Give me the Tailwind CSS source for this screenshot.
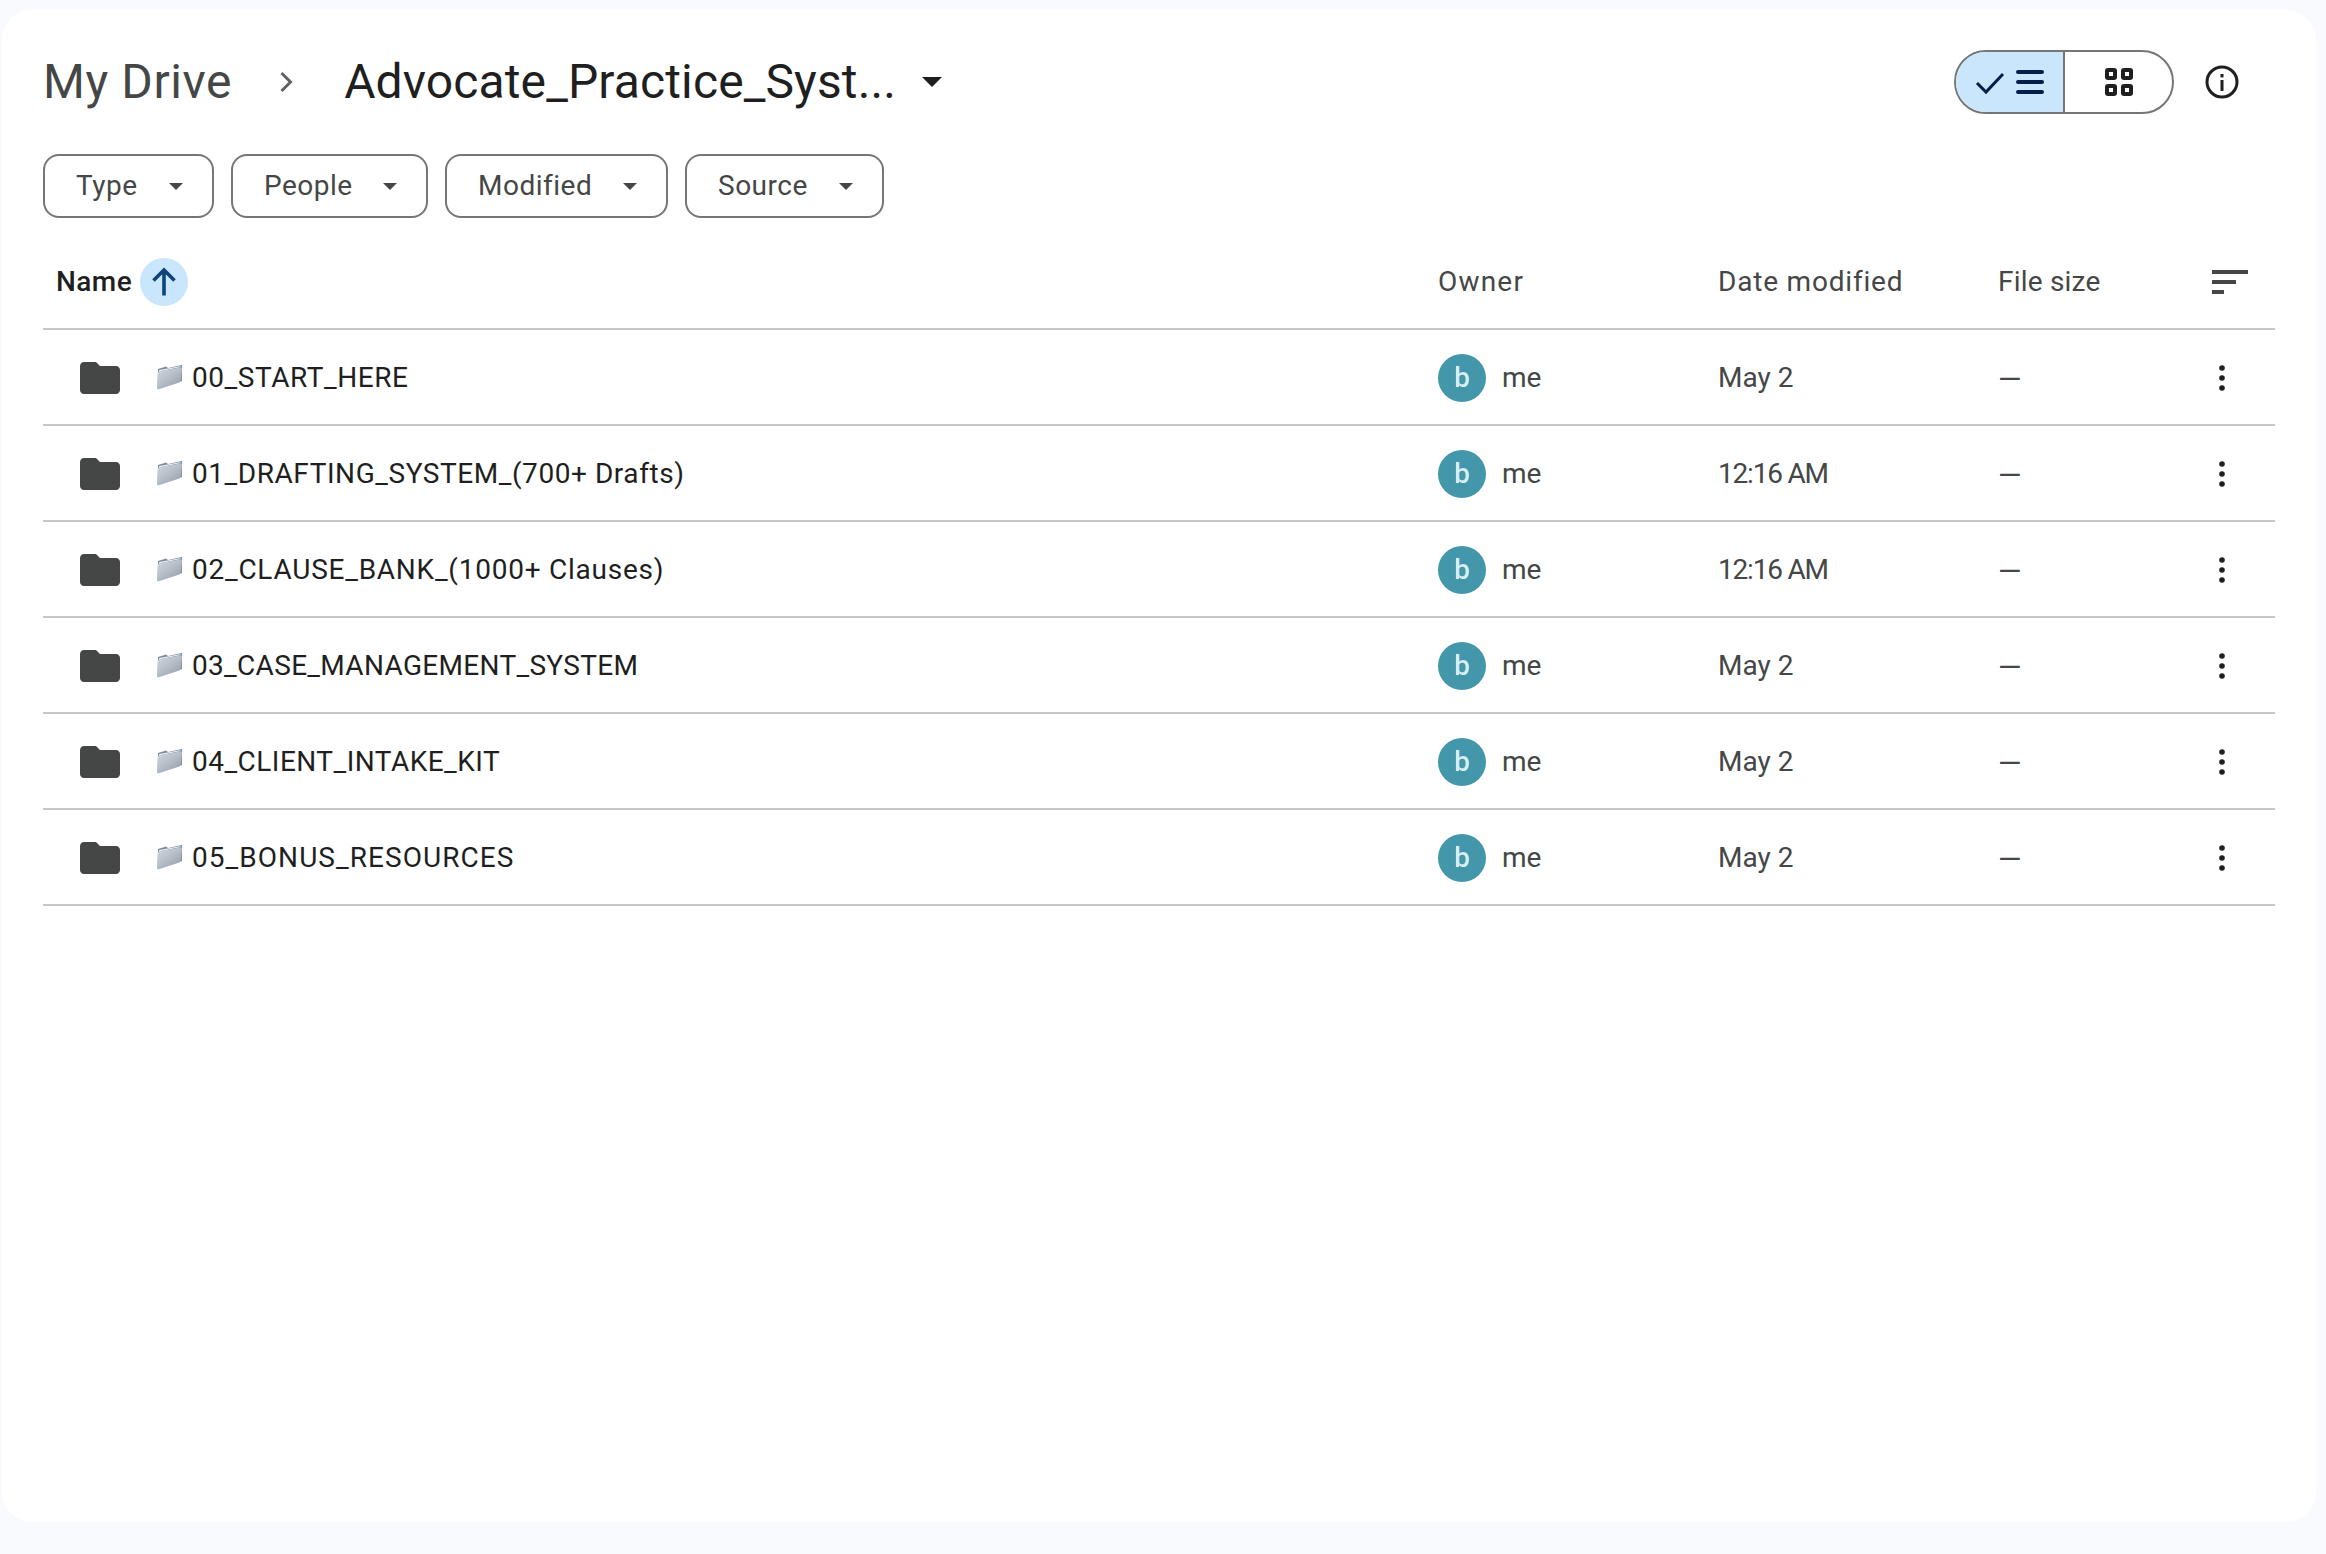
<!DOCTYPE html>
<html lang="en">
<head>
  <meta charset="UTF-8">
  <title>Advocate_Practice_System - Google Drive</title>
  <script src="https://cdn.jsdelivr.net/npm/@tailwindcss/browser@4"></script>
</head>
<body class="bg-[#f8fafd] h-screen overflow-hidden font-['Roboto',sans-serif]">
  <!-- shared icons -->
  <svg class="absolute w-0 h-0">
    <defs>
      <linearGradient id="miniface" x1="0" y1="0" x2="0.8" y2="1"><stop offset="0" stop-color="#d3d9e0"/><stop offset="0.55" stop-color="#b4bcc5"/><stop offset="1" stop-color="#949eaa"/></linearGradient>
    </defs>
    <symbol id="folder" viewBox="0 0 24 24"><path fill="#444746" d="M10 4H4c-1.1 0-2 .9-2 2v12c0 1.1.9 2 2 2h16c1.1 0 2-.9 2-2V8c0-1.1-.9-2-2-2h-8l-2-2z"/></symbol>
    <symbol id="mini" viewBox="0 0 27 26">
      <path fill="#7f8a96" d="M2 5 L10 2.5 L12 4 L26 1 L26 17 L2 24 Z"/>
      <path fill="#e8ecf0" d="M3 6 L24 2.2 L25 3 L3 7.5 Z"/>
      <path fill="url(#miniface)" d="M1.5 9 Q1.5 7.6 3 7.2 L24.5 3.4 Q26.4 3.2 26 5 L24.8 17 Q24.7 18 23.4 18.4 L2.6 25.2 Q1 25.6 1 24 Z"/>
    </symbol>
    <symbol id="dots" viewBox="0 0 36 36"><circle cx="18" cy="8" r="2.8" fill="#1f1f1f"/><circle cx="18" cy="18" r="2.8" fill="#1f1f1f"/><circle cx="18" cy="28" r="2.8" fill="#1f1f1f"/></symbol>
    <symbol id="caret" viewBox="0 0 10 5"><path d="M0 0l5 5 5-5z"/></symbol>
  </svg>

  <main class="mt-[10px] ml-[2px] w-[2314px] h-[1512px] bg-white rounded-[30px] pl-[41px]">
    <!-- title row -->
    <div class="pt-[40px] h-[104px] flex items-center w-[2232px]">
      <span class="text-[48px] leading-[64px] tracking-[0.6px] text-[#444746]">My Drive</span>
      <svg class="w-[36px] h-[36px] ml-[36px] text-[#5f6368]" viewBox="0 0 24 24" fill="none" stroke="currentColor" stroke-width="2"><path d="M9 6l6 6-6 6"/></svg>
      <span class="text-[48px] leading-[64px] tracking-[0.12px] text-[#1f1f1f] ml-[40px]">Advocate_Practice_Syst...</span>
      <svg class="w-[20px] h-[10px] ml-[26px] text-[#1f1f1f] fill-current"><use href="#caret"/></svg>
      <div class="ml-auto flex items-center h-[64px]">
        <div class="flex h-[64px] w-[220px] mr-[30px] rounded-full border-2 border-[#747775] overflow-hidden">
          <div class="w-[109px] bg-[#c9e6fd] border-r-2 border-[#747775] flex items-center justify-center">
            <svg class="w-[70px] h-[30px]" viewBox="0 0 70 30" fill="none" stroke="#041e49"><path d="M2 16l9 9L28 7" stroke-width="3"/><path d="M43 5h24M43 15h24M43 25h24" stroke-width="4" stroke-linecap="round"/></svg>
          </div>
          <div class="flex-1 flex items-center justify-center">
            <svg class="w-[28px] h-[28px]" viewBox="0 0 28 28" fill="none" stroke="#1f1f1f" stroke-width="4"><rect x="2" y="2" width="8" height="8" rx="1"/><rect x="18" y="2" width="8" height="8" rx="1"/><rect x="2" y="18" width="8" height="8" rx="1"/><rect x="18" y="18" width="8" height="8" rx="1"/></svg>
          </div>
        </div>
        <svg class="w-[36px] h-[36px] mr-[35px]" viewBox="0 0 36 36" fill="none"><circle cx="18" cy="18" r="15" stroke="#1f1f1f" stroke-width="3"/><rect x="16.5" y="16" width="3" height="11" fill="#1f1f1f"/><rect x="16.5" y="10" width="3" height="3.4" fill="#1f1f1f"/></svg>
      </div>
    </div>

    <!-- filters -->
    <div class="mt-[40px] flex gap-[17px] text-[28px] tracking-[0.5px] text-[#444746]">
      <button class="w-[171px] h-[64px] pl-[31px] pr-[29px] flex items-center justify-between rounded-[16px] border-2 border-[#747775]">Type<svg class="w-[14px] h-[7px] fill-current"><use href="#caret"/></svg></button>
      <button class="w-[197px] h-[64px] pl-[31px] pr-[29px] flex items-center justify-between rounded-[16px] border-2 border-[#747775]">People<svg class="w-[14px] h-[7px] fill-current"><use href="#caret"/></svg></button>
      <button class="w-[223px] h-[64px] pl-[31px] pr-[29px] flex items-center justify-between rounded-[16px] border-2 border-[#747775]">Modified<svg class="w-[14px] h-[7px] fill-current"><use href="#caret"/></svg></button>
      <button class="w-[199px] h-[64px] pl-[31px] pr-[29px] flex items-center justify-between rounded-[16px] border-2 border-[#747775]">Source<svg class="w-[14px] h-[7px] fill-current"><use href="#caret"/></svg></button>
    </div>

    <!-- file list -->
    <div class="w-[2232px] text-[28px] text-[#444746]">
      <div class="mt-[16px] h-[96px] pt-[2px] grid grid-cols-[1395px_279px_281px_171px_106px] items-center border-b-2 border-[#c7c7c7]">
        <div class="flex items-center pl-[13px]">
          <span class="text-[#1f1f1f] font-medium tracking-[0.45px]">Name</span>
          <span class="ml-[8px] w-[48px] h-[48px] rounded-full bg-[#c9e6fd] flex items-center justify-center">
            <svg class="w-[36px] h-[36px]" viewBox="0 0 24 24" fill="none" stroke="#0f4476" stroke-width="2.4"><path d="M12 21V4M5 11l7-7 7 7"/></svg>
          </span>
        </div>
        <div class="tracking-[1.2px]">Owner</div>
        <div class="tracking-[0.8px] pl-[1px]">Date modified</div>
        <div class="tracking-[0.2px]">File size</div>
        <div class="pl-[43px]"><svg class="w-[36px] h-[24px]" viewBox="0 0 36 24" fill="#444746"><rect width="36" height="4"/><rect y="10" width="24" height="4"/><rect y="20" width="12" height="4"/></svg></div>
      </div>

      <div class="h-[96px] pt-[2px] grid grid-cols-[1395px_279px_281px_171px_106px] items-center border-b-2 border-[#c7c7c7]">
        <div class="flex items-center pl-[33px]"><svg class="w-[48px] h-[48px]"><use href="#folder"/></svg><svg class="w-[27px] h-[26px] ml-[32px] -mt-[3px]"><use href="#mini"/></svg><span class="ml-[9px] text-[#1f1f1f] tracking-[0.56px]">00_START_HERE</span></div>
        <div class="flex items-center"><span class="w-[48px] h-[48px] rounded-full bg-[#4496aa] flex items-center justify-center"><span class="text-[#d5eef2] font-medium blur-[0.6px]">b</span></span><span class="ml-[16px]">me</span></div>
        <div class="pl-[1px]">May 2</div>
        <div class="text-[30px]">—</div>
        <div class="flex justify-center"><svg class="w-[36px] h-[36px]"><use href="#dots"/></svg></div>
      </div>
      <div class="h-[96px] pt-[2px] grid grid-cols-[1395px_279px_281px_171px_106px] items-center border-b-2 border-[#c7c7c7]">
        <div class="flex items-center pl-[33px]"><svg class="w-[48px] h-[48px]"><use href="#folder"/></svg><svg class="w-[27px] h-[26px] ml-[32px] -mt-[3px]"><use href="#mini"/></svg><span class="ml-[9px] text-[#1f1f1f] tracking-[0.56px]">01_DRAFTING_SYSTEM_(700+ Drafts)</span></div>
        <div class="flex items-center"><span class="w-[48px] h-[48px] rounded-full bg-[#4496aa] flex items-center justify-center"><span class="text-[#d5eef2] font-medium blur-[0.6px]">b</span></span><span class="ml-[16px]">me</span></div>
        <div class="pl-[1px] tracking-[-1.2px]">12:16 AM</div>
        <div class="text-[30px]">—</div>
        <div class="flex justify-center"><svg class="w-[36px] h-[36px]"><use href="#dots"/></svg></div>
      </div>
      <div class="h-[96px] pt-[2px] grid grid-cols-[1395px_279px_281px_171px_106px] items-center border-b-2 border-[#c7c7c7]">
        <div class="flex items-center pl-[33px]"><svg class="w-[48px] h-[48px]"><use href="#folder"/></svg><svg class="w-[27px] h-[26px] ml-[32px] -mt-[3px]"><use href="#mini"/></svg><span class="ml-[9px] text-[#1f1f1f] tracking-[0.76px]">02_CLAUSE_BANK_(1000+ Clauses)</span></div>
        <div class="flex items-center"><span class="w-[48px] h-[48px] rounded-full bg-[#4496aa] flex items-center justify-center"><span class="text-[#d5eef2] font-medium blur-[0.6px]">b</span></span><span class="ml-[16px]">me</span></div>
        <div class="pl-[1px] tracking-[-1.2px]">12:16 AM</div>
        <div class="text-[30px]">—</div>
        <div class="flex justify-center"><svg class="w-[36px] h-[36px]"><use href="#dots"/></svg></div>
      </div>
      <div class="h-[96px] pt-[2px] grid grid-cols-[1395px_279px_281px_171px_106px] items-center border-b-2 border-[#c7c7c7]">
        <div class="flex items-center pl-[33px]"><svg class="w-[48px] h-[48px]"><use href="#folder"/></svg><svg class="w-[27px] h-[26px] ml-[32px] -mt-[3px]"><use href="#mini"/></svg><span class="ml-[9px] text-[#1f1f1f] tracking-[0.32px]">03_CASE_MANAGEMENT_SYSTEM</span></div>
        <div class="flex items-center"><span class="w-[48px] h-[48px] rounded-full bg-[#4496aa] flex items-center justify-center"><span class="text-[#d5eef2] font-medium blur-[0.6px]">b</span></span><span class="ml-[16px]">me</span></div>
        <div class="pl-[1px]">May 2</div>
        <div class="text-[30px]">—</div>
        <div class="flex justify-center"><svg class="w-[36px] h-[36px]"><use href="#dots"/></svg></div>
      </div>
      <div class="h-[96px] pt-[2px] grid grid-cols-[1395px_279px_281px_171px_106px] items-center border-b-2 border-[#c7c7c7]">
        <div class="flex items-center pl-[33px]"><svg class="w-[48px] h-[48px]"><use href="#folder"/></svg><svg class="w-[27px] h-[26px] ml-[32px] -mt-[3px]"><use href="#mini"/></svg><span class="ml-[9px] text-[#1f1f1f] tracking-[0.48px]">04_CLIENT_INTAKE_KIT</span></div>
        <div class="flex items-center"><span class="w-[48px] h-[48px] rounded-full bg-[#4496aa] flex items-center justify-center"><span class="text-[#d5eef2] font-medium blur-[0.6px]">b</span></span><span class="ml-[16px]">me</span></div>
        <div class="pl-[1px]">May 2</div>
        <div class="text-[30px]">—</div>
        <div class="flex justify-center"><svg class="w-[36px] h-[36px]"><use href="#dots"/></svg></div>
      </div>
      <div class="h-[96px] pt-[2px] grid grid-cols-[1395px_279px_281px_171px_106px] items-center border-b-2 border-[#c7c7c7]">
        <div class="flex items-center pl-[33px]"><svg class="w-[48px] h-[48px]"><use href="#folder"/></svg><svg class="w-[27px] h-[26px] ml-[32px] -mt-[3px]"><use href="#mini"/></svg><span class="ml-[9px] text-[#1f1f1f] tracking-[1.06px]">05_BONUS_RESOURCES</span></div>
        <div class="flex items-center"><span class="w-[48px] h-[48px] rounded-full bg-[#4496aa] flex items-center justify-center"><span class="text-[#d5eef2] font-medium blur-[0.6px]">b</span></span><span class="ml-[16px]">me</span></div>
        <div class="pl-[1px]">May 2</div>
        <div class="text-[30px]">—</div>
        <div class="flex justify-center"><svg class="w-[36px] h-[36px]"><use href="#dots"/></svg></div>
      </div>
    </div>
  </main>
</body>
</html>
